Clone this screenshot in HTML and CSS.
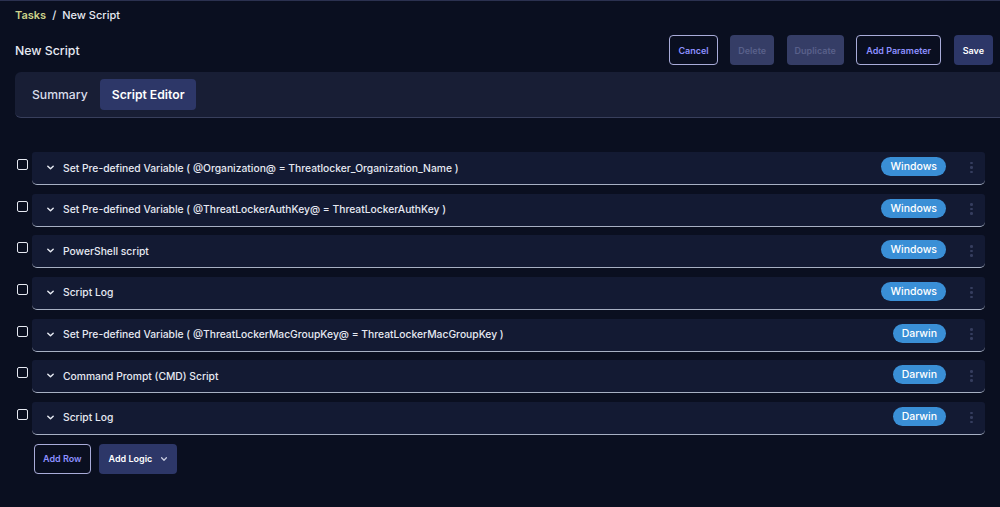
FILE: index.html
```html
<!DOCTYPE html>
<html>
<head>
    <title>New Script</title>
    <link rel="stylesheet" href="styles.css">
</head>
<body>
    <div class="page">
        <div class="breadcrumb">
            <a class="crumb-link">Tasks</a>
            <span class="crumb-sep">/</span>
            <span class="crumb-current">New Script</span>
        </div>

        <div class="title-row">
            <h1 class="page-title">New Script</h1>
            <div class="actions">
                <button class="btn btn-outline">Cancel</button>
                <button class="btn btn-disabled" disabled>Delete</button>
                <button class="btn btn-disabled" disabled>Duplicate</button>
                <button class="btn btn-outline btn-wide">Add Parameter</button>
                <button class="btn btn-primary">Save</button>
            </div>
        </div>

        <div class="tabs">
            <div class="tab">Summary</div>
            <div class="tab active">Script Editor</div>
        </div>

        <div class="rows">
            <div class="row-line">
                <span class="checkbox"></span>
                <div class="step">
                    <svg class="chevron" viewBox="0 0 10 10"><path d="M2 3.5 L5 6.5 L8 3.5" /></svg>
                    <span class="step-name">Set Pre-defined Variable ( @Organization@ = Threatlocker_Organization_Name )</span>
                    <span class="badge windows">Windows</span>
                    <span class="kebab"><i></i><i></i><i></i></span>
                </div>
            </div>
            <div class="row-line">
                <span class="checkbox"></span>
                <div class="step">
                    <svg class="chevron" viewBox="0 0 10 10"><path d="M2 3.5 L5 6.5 L8 3.5" /></svg>
                    <span class="step-name">Set Pre-defined Variable ( @ThreatLockerAuthKey@ = ThreatLockerAuthKey )</span>
                    <span class="badge windows">Windows</span>
                    <span class="kebab"><i></i><i></i><i></i></span>
                </div>
            </div>
            <div class="row-line">
                <span class="checkbox"></span>
                <div class="step">
                    <svg class="chevron" viewBox="0 0 10 10"><path d="M2 3.5 L5 6.5 L8 3.5" /></svg>
                    <span class="step-name">PowerShell script</span>
                    <span class="badge windows">Windows</span>
                    <span class="kebab"><i></i><i></i><i></i></span>
                </div>
            </div>
            <div class="row-line">
                <span class="checkbox"></span>
                <div class="step">
                    <svg class="chevron" viewBox="0 0 10 10"><path d="M2 3.5 L5 6.5 L8 3.5" /></svg>
                    <span class="step-name">Script Log</span>
                    <span class="badge windows">Windows</span>
                    <span class="kebab"><i></i><i></i><i></i></span>
                </div>
            </div>
            <div class="row-line">
                <span class="checkbox"></span>
                <div class="step">
                    <svg class="chevron" viewBox="0 0 10 10"><path d="M2 3.5 L5 6.5 L8 3.5" /></svg>
                    <span class="step-name">Set Pre-defined Variable ( @ThreatLockerMacGroupKey@ = ThreatLockerMacGroupKey )</span>
                    <span class="badge darwin">Darwin</span>
                    <span class="kebab"><i></i><i></i><i></i></span>
                </div>
            </div>
            <div class="row-line">
                <span class="checkbox"></span>
                <div class="step">
                    <svg class="chevron" viewBox="0 0 10 10"><path d="M2 3.5 L5 6.5 L8 3.5" /></svg>
                    <span class="step-name">Command Prompt (CMD) Script</span>
                    <span class="badge darwin">Darwin</span>
                    <span class="kebab"><i></i><i></i><i></i></span>
                </div>
            </div>
            <div class="row-line">
                <span class="checkbox"></span>
                <div class="step">
                    <svg class="chevron" viewBox="0 0 10 10"><path d="M2 3.5 L5 6.5 L8 3.5" /></svg>
                    <span class="step-name">Script Log</span>
                    <span class="badge darwin">Darwin</span>
                    <span class="kebab"><i></i><i></i><i></i></span>
                </div>
            </div>
        </div>

        <div class="bottom-actions">
            <button class="btn btn-outline btn-tall">Add Row</button>
            <button class="btn btn-primary btn-tall btn-logic">
                Add Logic
                <svg class="chevron small" viewBox="0 0 10 10"><path d="M2 3.5 L5 6.5 L8 3.5" /></svg>
            </button>
        </div>
    </div>
</body>
</html>
```

FILE: styles.css
```css
:root {
    --bg: #0a0f20;
    --panel: #181e35;
    --row-bg: #131a33;
    --accent: #2d3768;
    --accent-text: #8d90ff;
    --outline: #a9acd9;
    --text: #e6e9f2;
    --badge: #3a8fd6;
}

body {
    margin: 0;
    background-color: var(--bg);
    font-family: Inter, "Noto Sans", sans-serif;
    color: var(--text);
}

.page {
    border-top: 1px solid #2b3150;
    height: 506px;
    overflow: hidden;
}

.breadcrumb {
    display: flex;
    align-items: center;
    gap: 5px;
    padding: 6px 15px 0;
    height: 15px;
    font-size: 11px;
    font-weight: 500;
}

.crumb-link {
    color: #cdd28a;
    font-weight: 600;
}

.crumb-sep {
    color: #e6e9f2;
    margin: 0 1px;
}

.title-row {
    display: flex;
    justify-content: space-between;
    align-items: center;
    padding: 13px 7px 0 15px;
}

.page-title {
    margin: 0;
    font-size: 12.3px;
    font-weight: 500;
}

.actions {
    display: flex;
    gap: 12.5px;
}

.btn {
    font-family: inherit;
    font-size: 9px;
    font-weight: 600;
    height: 30px;
    padding: 0 8px;
    border-radius: 4px;
    border: 1px solid transparent;
    background: none;
    cursor: pointer;
}

.btn-outline {
    border-color: var(--outline);
    color: var(--accent-text);
    background-color: transparent;
}

.btn-wide {
    padding: 0 9px;
}

.btn-disabled {
    background-color: #353d66;
    color: #59608a;
    padding: 0 7px;
}

.btn-primary {
    background-color: var(--accent);
    color: #ffffff;
}

.tabs {
    display: flex;
    align-items: center;
    gap: 2px;
    margin: 7px 0 0 15px;
    padding: 0 7px 0 7px;
    height: 45px;
    background-color: var(--panel);
    border-bottom: 1px solid #383f5c;
    border-radius: 6px 0 0 6px;
}

.tab {
    font-size: 12.2px;
    font-weight: 500;
    padding: 0 10px;
    height: 31px;
    line-height: 31px;
    border-radius: 4px;
    color: #d9dcea;
}

.tab.active {
    background-color: var(--accent);
    color: #ffffff;
    font-weight: 600;
    padding: 0 12px;
}

.rows {
    display: flex;
    flex-direction: column;
    gap: 8.67px;
    margin-top: 34px;
}

.row-line {
    display: flex;
    align-items: flex-start;
    padding: 0 15px 0 17px;
}

.checkbox {
    width: 9px;
    height: 9px;
    margin-top: 7px;
    margin-right: 4px;
    border: 1.5px solid #e6e9f2;
    border-radius: 2px;
    flex-shrink: 0;
}

.step {
    flex: 1;
    display: flex;
    align-items: center;
    height: 32px;
    padding: 0 0 1px 14px;
    box-sizing: border-box;
    height: 33px;
    background-color: var(--row-bg);
    border-bottom: 1px solid #a7b0c3;
    border-radius: 3px 3px 5px 5px;
}

.chevron {
    width: 9px;
    height: 9px;
    fill: none;
    stroke: #e6e9f2;
    stroke-width: 1.6;
    stroke-linecap: round;
    stroke-linejoin: round;
}

.step-name {
    flex: 1;
    margin-left: 8px;
    font-size: 10.3px;
    font-weight: 500;
}

.badge {
    font-size: 10.5px;
    font-weight: 500;
    color: #ffffff;
    background-color: var(--badge);
    border-radius: 10px;
    height: 19px;
    line-height: 19px;
    padding: 0 9px;
    margin-top: -2px;
}

.kebab {
    display: flex;
    flex-direction: column;
    gap: 2px;
    width: 3px;
    margin: 0 12px 0 24px;
}

.kebab i {
    display: block;
    width: 2.5px;
    height: 2.5px;
    border-radius: 50%;
    background-color: #353d5e;
}

.bottom-actions {
    display: flex;
    gap: 8px;
    margin: 9px 0 0 34px;
}

.btn-tall {
    height: 30px;
    padding: 0 8px;
}

.btn-logic {
    display: flex;
    align-items: center;
    gap: 8px;
    padding: 0 8px 0 9px;
}

.chevron.small {
    width: 8px;
    height: 8px;
    stroke: #c9cde0;
}
```
